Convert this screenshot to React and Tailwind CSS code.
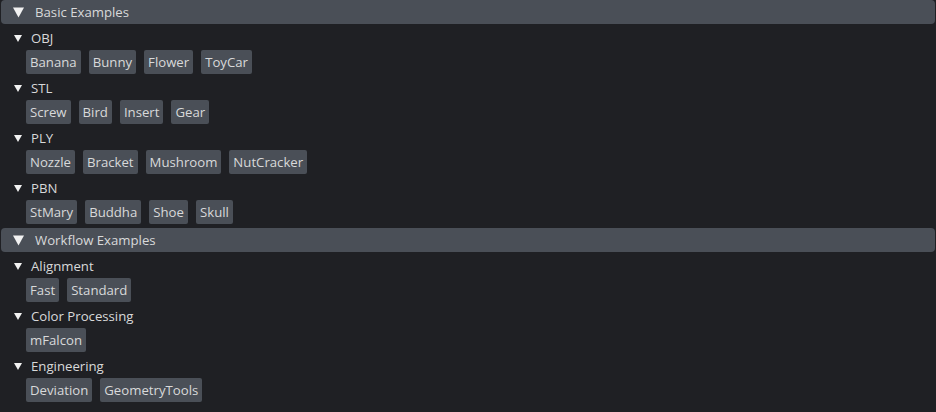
import React from 'react';

const sections = [
    {
        title: 'Basic Examples',
        groups: [
            { name: 'OBJ', items: ['Banana', 'Bunny', 'Flower', 'ToyCar'] },
            { name: 'STL', items: ['Screw', 'Bird', 'Insert', 'Gear'] },
            { name: 'PLY', items: ['Nozzle', 'Bracket', 'Mushroom', 'NutCracker'] },
            { name: 'PBN', items: ['StMary', 'Buddha', 'Shoe', 'Skull'] },
        ],
    },
    {
        title: 'Workflow Examples',
        groups: [
            { name: 'Alignment', items: ['Fast', 'Standard'] },
            { name: 'Color Processing', items: ['mFalcon'] },
            { name: 'Engineering', items: ['Deviation', 'GeometryTools'] },
        ],
    },
];

const BigArrow = () => (
    <svg width="11" height="11" viewBox="0 0 11 11" className="shrink-0">
        <polygon points="0,0.5 11,0.5 5.5,10.5" fill="#f2f2f2" />
    </svg>
);

const SmallArrow = () => (
    <svg width="8" height="7" viewBox="0 0 8 7" className="shrink-0">
        <polygon points="0,0 8,0 4,7" fill="#f2f2f2" />
    </svg>
);

const App = () => {
    return (
        <div
            className="w-[936px] h-[412px] overflow-hidden bg-[#1f2024] text-[13.2px] text-[#d8d9da]"
            style={{ fontFamily: '"Open Sans", "Noto Sans", sans-serif' }}
        >
            {sections.map((section, i) => (
                <div key={section.title} className={i > 0 ? 'mt-[3px]' : ''}>
                    {/* Section header */}
                    <div className="mx-px mb-px h-6 rounded-sm bg-[#4a4f57] flex items-center pl-3">
                        <BigArrow />
                        <span className="ml-[11px] pt-px leading-none">{section.title}</span>
                    </div>

                    {section.groups.map((group) => (
                        <div key={group.name}>
                            <div className="h-[25px] flex items-center pl-[14px] pt-[2px]">
                                <SmallArrow />
                                <span className="ml-[9px] leading-none">{group.name}</span>
                            </div>
                            <div className="h-[25px] flex items-start gap-2 pl-[26px]">
                                {group.items.map((item) => (
                                    <button
                                        key={item}
                                        className="h-6 px-1 pt-px rounded-[2px] bg-[#4a4f57] text-[#d8d9da] leading-none"
                                    >
                                        {item}
                                    </button>
                                ))}
                            </div>
                        </div>
                    ))}
                </div>
            ))}
        </div>
    );
};

export default App;
